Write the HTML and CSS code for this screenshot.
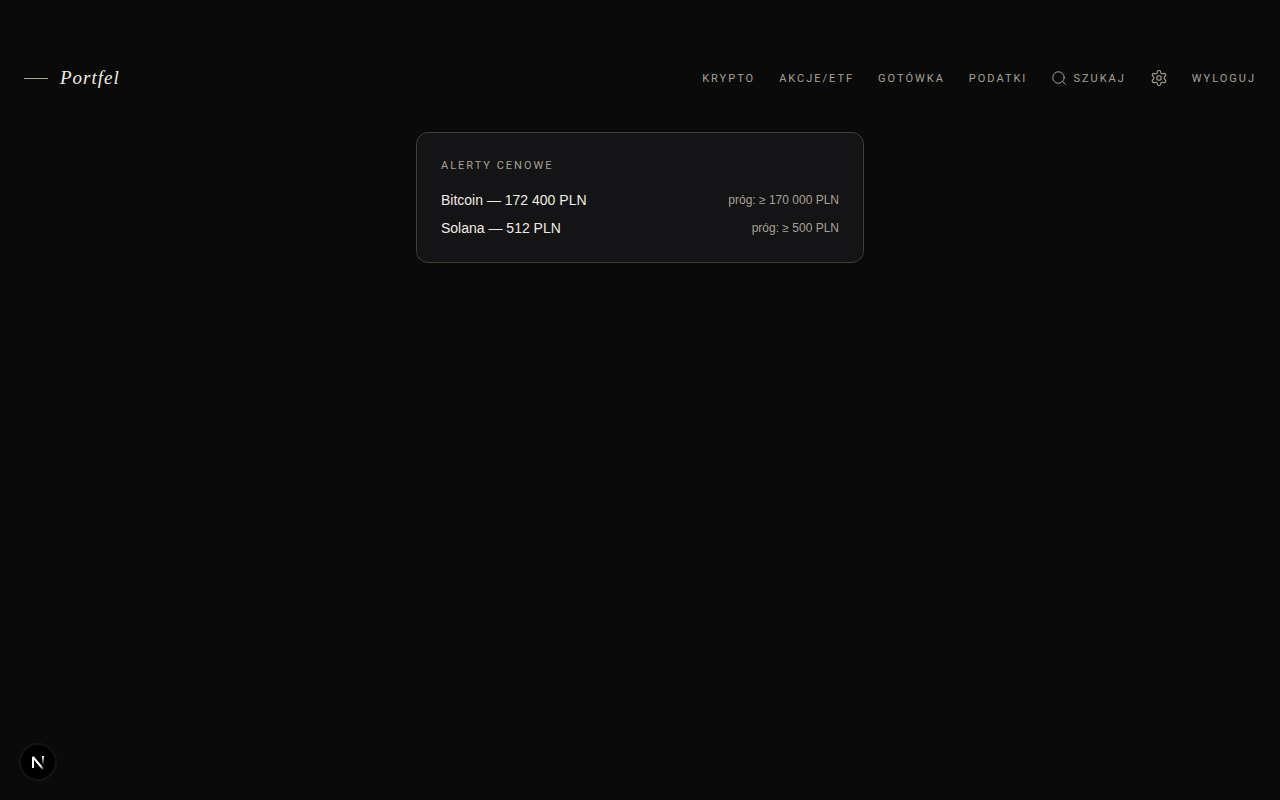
FILE: index.html
```html
<!DOCTYPE html>
<html lang="pl">
<head>
    <meta charset="UTF-8">
    <meta name="viewport" content="width=device-width, initial-scale=1.0">
    <title>Portfel</title>
    <link rel="stylesheet" href="styles.css">
</head>
<body>
    <header class="header">
        <a class="logo" href="#"><span class="logo-line"></span>Portfel</a>
        <nav class="nav">
            <a href="#">Krypto</a>
            <a href="#">Akcje/ETF</a>
            <a href="#">Gotówka</a>
            <a href="#">Podatki</a>
            <button class="search" type="button">
                <svg width="16" height="16" viewBox="0 0 16 16" fill="none" stroke="currentColor" stroke-linecap="round">
                    <circle cx="7.5" cy="7.5" r="5.7"/>
                    <path d="M11.7 11.7l2.6 2.6"/>
                </svg>
                Szukaj
            </button>
            <a href="#" aria-label="Ustawienia">
                <svg width="18" height="18" viewBox="0 0 24 24" fill="none" stroke="currentColor" stroke-width="1.5" stroke-linecap="round" stroke-linejoin="round">
                    <path d="M12.22 2h-.44a2 2 0 0 0-2 2v.18a2 2 0 0 1-1 1.73l-.43.25a2 2 0 0 1-2 0l-.15-.08a2 2 0 0 0-2.73.73l-.22.38a2 2 0 0 0 .73 2.73l.15.1a2 2 0 0 1 1 1.72v.51a2 2 0 0 1-1 1.74l-.15.09a2 2 0 0 0-.73 2.73l.22.38a2 2 0 0 0 2.73.73l.15-.08a2 2 0 0 1 2 0l.43.25a2 2 0 0 1 1 1.73V20a2 2 0 0 0 2 2h.44a2 2 0 0 0 2-2v-.18a2 2 0 0 1 1-1.73l.43-.25a2 2 0 0 1 2 0l.15.08a2 2 0 0 0 2.73-.73l.22-.39a2 2 0 0 0-.73-2.73l-.15-.08a2 2 0 0 1-1-1.74v-.5a2 2 0 0 1 1-1.74l.15-.09a2 2 0 0 0 .73-2.73l-.22-.38a2 2 0 0 0-2.73-.73l-.15.08a2 2 0 0 1-2 0l-.43-.25a2 2 0 0 1-1-1.73V4a2 2 0 0 0-2-2z"/>
                    <circle cx="12" cy="12" r="3"/>
                </svg>
            </a>
            <button type="button">Wyloguj</button>
        </nav>
    </header>

    <main class="main">
        <section class="card">
            <h2>Alerty cenowe</h2>
            <ul class="alerts">
                <li><span>Bitcoin — 172 400 PLN</span><span class="limit">próg: ≥ 170 000 PLN</span></li>
                <li><span>Solana — 512 PLN</span><span class="limit">próg: ≥ 500 PLN</span></li>
            </ul>
        </section>
    </main>

    <button class="dev-badge" type="button" aria-label="Next.js">
        <svg width="36" height="36" viewBox="0 0 36 36" fill="none">
            <defs>
                <linearGradient id="diagonal" x1="18" y1="18" x2="23" y2="25" gradientUnits="userSpaceOnUse">
                    <stop offset="0.5" stop-color="#fff"/>
                    <stop offset="1" stop-color="#fff" stop-opacity="0.3"/>
                </linearGradient>
                <linearGradient id="stem" x1="23" y1="12" x2="23" y2="21" gradientUnits="userSpaceOnUse">
                    <stop stop-color="#fff"/>
                    <stop offset="1" stop-color="#fff" stop-opacity="0"/>
                </linearGradient>
            </defs>
            <path d="M13 24V13l10 12" stroke="url(#diagonal)" stroke-width="2" stroke-linejoin="bevel"/>
            <path d="M23 12v9" stroke="url(#stem)" stroke-width="2"/>
        </svg>
    </button>
</body>
</html>
```
FILE: styles.css
```css
body {
    margin: 0;
    background-color: #0a0a0a;
    color: #f0ebe0;
    font-family: "Liberation Sans", sans-serif;
    font-size: 14px;
    line-height: 20px;
}
.header {
    display: flex;
    justify-content: space-between;
    align-items: center;
    padding: 64px 24px 40px;
}
.logo {
    display: flex;
    align-items: center;
    gap: 12px;
    color: #f0ebe0;
    font-family: "Liberation Serif", serif;
    font-size: 19px;
    font-style: italic;
    line-height: 28px;
    letter-spacing: 1px;
    text-decoration: none;
}
.logo-line {
    width: 24px;
    height: 1px;
    background-color: #a8a294;
}
.nav {
    display: flex;
    align-items: center;
    gap: 24px;
}
.nav a, .nav button {
    display: flex;
    align-items: center;
    padding: 0;
    border: none;
    background: none;
    color: #a8a294;
    font-family: Roboto, sans-serif;
    font-size: 11px;
    line-height: 17px;
    letter-spacing: 2px;
    text-transform: uppercase;
    text-decoration: none;
    cursor: pointer;
}
.nav .search {
    gap: 6px;
}
.main {
    padding: 0 24px;
}
.card {
    box-sizing: border-box;
    max-width: 448px;
    margin: 0 auto;
    padding: 24px;
    border: 1px solid #423d32;
    border-radius: 12px;
    background-color: #141416;
}
.card h2 {
    margin: 0 0 16px;
    color: #a8a294;
    font-family: Roboto, sans-serif;
    font-size: 11px;
    font-weight: 400;
    line-height: 17px;
    letter-spacing: 2px;
    text-transform: uppercase;
}
.alerts {
    display: flex;
    flex-direction: column;
    gap: 8px;
    margin: 0;
    padding: 0;
    list-style: none;
}
.alerts li {
    display: flex;
    justify-content: space-between;
    align-items: center;
}
.limit {
    color: #a8a294;
    font-size: 12px;
}
.dev-badge {
    position: fixed;
    left: 20px;
    bottom: 20px;
    padding: 0;
    border: none;
    border-radius: 50%;
    background-color: #000;
    box-shadow: 0 0 0 1px #171717, inset 0 0 0 1px #171717;
    line-height: 0;
    cursor: pointer;
}
```
